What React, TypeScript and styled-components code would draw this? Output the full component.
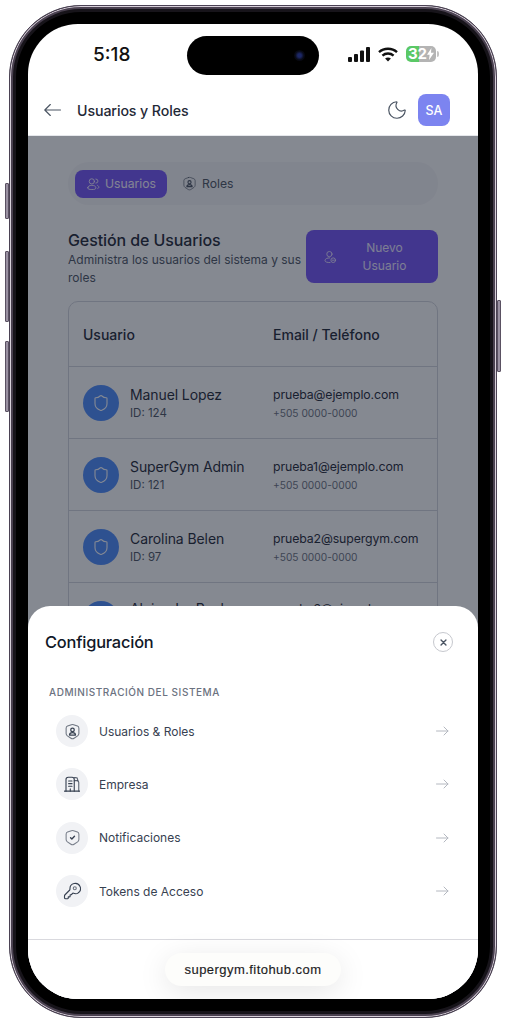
import React from 'react';
import styled, { createGlobalStyle } from 'styled-components';
import { Moon, Shield } from 'lucide-react';

const GlobalStyle = createGlobalStyle`
  html, body {
    margin: 0;
    padding: 0;
    background: #ffffff;
    font-family: "Inter", "Noto Sans", sans-serif;
  }
  * { box-sizing: border-box; }
`;

const Page = styled.div`
  width: 506px;
  height: 1024px;
  padding: 5px 9px 6px;
  overflow: hidden;
`;

const Phone = styled.div`
  position: relative;
  width: 488px;
  height: 1013px;
  padding: 19px;
  border-radius: 72px;
  background: #000;
  border: 1px solid #4b4254;
  box-shadow: inset 0 0 0 1px #d8d0da, inset 0 0 0 3px #4a4150, inset 0 0 0 6px #17141a;
`;

const SideButton = styled.span<{ $top: number; $height: number; $right?: boolean }>`
  position: absolute;
  top: ${(p) => p.$top}px;
  height: ${(p) => p.$height}px;
  width: 4px;
  ${(p) => (p.$right ? 'right: -5px;' : 'left: -5px;')}
  background: #9a91a2;
  border: 1px solid #5a5162;
  border-radius: 1px;
`;

const Screen = styled.div`
  position: relative;
  display: flex;
  flex-direction: column;
  width: 450px;
  height: 975px;
  margin-left: -1px;
  margin-top: -1px;
  border-radius: 50px;
  overflow: hidden;
  background: #fff;
`;

const StatusBar = styled.div`
  display: grid;
  grid-template-columns: 159px 132px 1fr;
  height: 64px;
  flex-shrink: 0;
  padding-top: 12px;
  align-items: start;
`;

const Time = styled.div`
  height: 39px;
  line-height: 38px;
  padding-left: 65px;
  font-size: 19px;
  font-weight: 500;
  color: #111;
`;

const Island = styled.div`
  position: relative;
  height: 39px;
  border-radius: 20px;
  background: #000;
`;

const Camera = styled.span`
  position: absolute;
  top: 14px;
  right: 14px;
  width: 11px;
  height: 11px;
  border-radius: 50%;
  background: radial-gradient(circle, #1c2766 0 22%, #090b18 55%, #000 100%);
`;

const StatusIcons = styled.div`
  display: flex;
  align-items: center;
  gap: 8px;
  height: 36px;
  padding-left: 29px;
`;

const Battery = styled.div`
  position: relative;
  display: flex;
  align-items: center;
  justify-content: center;
  width: 30px;
  height: 16px;
  border-radius: 5px;
  background: linear-gradient(90deg, #5ac866 0 42%, #b4b4b4 42% 100%);
  color: #fff;
  font-size: 15px;
  font-weight: 700;
  line-height: 16px;
  &::after {
    content: '';
    position: absolute;
    right: -3px;
    top: 5px;
    width: 2px;
    height: 6px;
    border-radius: 0 2px 2px 0;
    background: #c4c4c4;
  }
`;

const Header = styled.header`
  display: flex;
  align-items: center;
  height: 47px;
  flex-shrink: 0;
  padding: 0 28px 3px 16px;
  background: #fff;
`;

const BackButton = styled.span`
  display: flex;
  width: 33px;
  color: #4b5563;
`;

const HeaderTitle = styled.h1`
  flex: 1;
  margin: 0;
  font-size: 14.2px;
  font-weight: 500;
  letter-spacing: -0.1px;
  color: #1f2937;
`;

const ThemeToggle = styled.span`
  display: flex;
  margin-right: 10px;
  color: #4b5563;
`;

const UserBadge = styled.div`
  display: flex;
  align-items: center;
  justify-content: center;
  width: 32px;
  height: 32px;
  border-radius: 8px;
  background: #7c84f0;
  color: #fff;
  font-size: 12.5px;
  font-weight: 500;
`;

const Body = styled.main`
  position: relative;
  flex: 1;
  padding: 26px 40px 0;
  background: #f9fafb;
  border-top: 1px solid #e5e7eb;
  overflow: hidden;
`;

const Scrim = styled.div`
  position: absolute;
  inset: 0;
  background: rgba(17, 24, 39, 0.5);
`;

const TabBar = styled.nav`
  display: flex;
  align-items: center;
  gap: 4px;
  height: 43px;
  padding: 0 7px;
  border-radius: 21px;
  background: #f1f2f4;
`;

const Tab = styled.div<{ $active?: boolean }>`
  display: flex;
  align-items: center;
  gap: 5px;
  height: 28px;
  padding: 0 11px;
  border-radius: 8px;
  background: ${(p) => (p.$active ? '#7355f4' : 'transparent')};
  color: ${(p) => (p.$active ? '#f2efff' : '#4b5563')};
  font-size: 12.2px;
  font-weight: 400;
`;

const Section = styled.div`
  display: flex;
  gap: 4px;
  margin-top: 25px;
`;

const SectionText = styled.div`
  flex: 1;
`;

const SectionTitle = styled.h2`
  margin: 0;
  font-size: 16px;
  line-height: 20px;
  font-weight: 500;
  letter-spacing: -0.1px;
  color: #1f2937;
`;

const SectionSub = styled.p`
  margin: 1px 0 0;
  font-size: 12px;
  line-height: 18px;
  color: #4b5563;
`;

const NewButton = styled.div`
  display: flex;
  align-items: center;
  width: 132px;
  height: 53px;
  flex-shrink: 0;
  padding: 0 6px 0 17px;
  border-radius: 8px;
  background: #7355f4;
  color: #e8e4ff;
  font-size: 12px;
  line-height: 18px;
  font-weight: 400;
`;

const NewLabel = styled.span`
  flex: 1;
  text-align: center;
`;

const Table = styled.div`
  margin-top: 14px;
  border: 1px solid #cfd3da;
  border-radius: 10px;
`;

const HeadRow = styled.div`
  display: grid;
  grid-template-columns: 190px 1fr;
  align-items: center;
  height: 64px;
  padding-left: 14px;
  font-size: 14px;
  font-weight: 500;
  color: #1f2937;
`;

const Row = styled.div`
  display: grid;
  grid-template-columns: 190px 1fr;
  align-items: center;
  height: 72px;
  padding-left: 14px;
  border-top: 1.5px solid #cfd3da;
`;

const UserCell = styled.div`
  display: flex;
  align-items: center;
  gap: 11px;
`;

const RowAvatar = styled.div`
  display: flex;
  align-items: center;
  justify-content: center;
  width: 36px;
  height: 36px;
  border-radius: 50%;
  background: #4a8af8;
  color: #f5f8ff;
`;

// a cut row has no second line, the padding keeps its first line in place
const CellText = styled.div<{ $cut?: boolean }>`
  padding-top: 3px;
  padding-bottom: ${(p) => (p.$cut ? 23 : 0)}px;
`;

const PrimaryText = styled.div<{ $small?: boolean }>`
  font-size: ${(p) => (p.$small ? 12.3 : 14)}px;
  line-height: 19px;
  letter-spacing: -0.1px;
  color: #1f2937;
`;

const SecondaryText = styled.div<{ $small?: boolean }>`
  font-size: ${(p) => (p.$small ? 10.2 : 11.5)}px;
  line-height: 19px;
  color: ${(p) => (p.$small ? '#6b7280' : '#4b5563')};
`;

const Sheet = styled.section`
  position: absolute;
  left: 0;
  right: 0;
  bottom: 0;
  height: 393px;
  display: flex;
  flex-direction: column;
  border-radius: 22px 22px 0 0;
  background: #fff;
`;

const SheetHeader = styled.div`
  display: flex;
  align-items: center;
  justify-content: space-between;
  height: 36px;
  margin-top: 18px;
  padding: 0 25px 0 17px;
`;

const SheetTitle = styled.h3`
  margin: 0;
  font-size: 16.4px;
  font-weight: 500;
  letter-spacing: -0.2px;
  color: #111827;
`;

const CloseButton = styled.span`
  display: flex;
  align-items: center;
  justify-content: center;
  width: 20px;
  height: 20px;
  border: 1.5px solid #c6c8ce;
  border-radius: 50%;
  color: #4b5563;
`;

const GroupLabel = styled.div`
  margin: 25px 0 0 21px;
  height: 14px;
  font-size: 10px;
  line-height: 14px;
  font-weight: 500;
  letter-spacing: 0.55px;
  text-transform: uppercase;
  color: #6b7280;
`;

const MenuList = styled.div`
  display: flex;
  flex-direction: column;
  gap: 21.4px;
  margin-top: 16px;
  padding: 0 29px 0 28px;
`;

const MenuItem = styled.div`
  display: flex;
  align-items: center;
  gap: 11px;
  height: 32px;
  font-size: 12px;
  color: #374151;
`;

const MenuIcon = styled.span`
  display: flex;
  align-items: center;
  justify-content: center;
  width: 32px;
  height: 32px;
  border-radius: 50%;
  background: #f1f2f5;
  color: #374151;
`;

const MenuLabel = styled.span`
  flex: 1;
`;

const MenuArrow = styled.span`
  display: flex;
  color: #b4b8c0;
`;

const BrowserBar = styled.footer`
  position: absolute;
  left: 0;
  right: 0;
  bottom: 0;
  height: 60px;
  display: flex;
  justify-content: center;
  padding-top: 13px;
  border-top: 1px solid #d9d9de;
  background: #fff;
`;

const UrlPill = styled.div`
  width: 176px;
  height: 33px;
  border-radius: 17px;
  background: #fdfdfb;
  box-shadow: 0 6px 30px rgba(0, 0, 0, 0.1);
  font-family: "Liberation Sans", Arial, sans-serif;
  font-size: 13px;
  line-height: 33px;
  letter-spacing: 0.45px;
  text-align: center;
  color: #1c1c1e;
  -webkit-text-stroke: 0.15px #1c1c1e;
`;

type IconProps = { size?: number };

const Stroke = ({ size = 18, children }: IconProps & { children: React.ReactNode }) => (
  <svg width={size} height={size} viewBox="0 0 24 24" fill="none" stroke="currentColor" strokeWidth={1.5} strokeLinecap="round" strokeLinejoin="round">
    {children}
  </svg>
);

const SignalIcon = () => (
  <svg width="22" height="15" viewBox="0 0 22 15" fill="#111">
    <rect x="0" y="10" width="4" height="5" rx="1" />
    <rect x="6" y="7" width="4" height="8" rx="1" />
    <rect x="12" y="3.5" width="4" height="11.5" rx="1" />
    <rect x="18" y="0" width="4" height="15" rx="1" />
  </svg>
);

const WifiIcon = () => (
  <svg width="20" height="15" viewBox="0 0 20 15" fill="none" stroke="#111" strokeWidth="2.4">
    <path d="M1 5.2C6 .6 14 .6 19 5.2" />
    <path d="M4.4 8.6c3.2-2.8 8-2.8 11.2 0" />
    <path d="M10 14.6l-2.9-3.1c1.7-1.3 4.1-1.3 5.8 0z" fill="#111" stroke="none" />
  </svg>
);

const BoltIcon = () => (
  <svg width="7" height="12" viewBox="0 0 7 12" fill="#fff">
    <path d="M4.4 0 0 6.8h2.6L2 12l5-7.2H4z" />
  </svg>
);

const LongArrowLeft = () => (
  <svg width="17" height="14" viewBox="0 0 17 14" fill="none" stroke="currentColor" strokeWidth="1.15" strokeLinecap="round" strokeLinejoin="round">
    <path d="M16.5 7H.8M6.3 1.500.8 7l5.500 5.500" />
  </svg>
);

const LongArrowRight = () => (
  <svg width="13" height="10" viewBox="0 0 13 10" fill="none" stroke="currentColor" strokeWidth="1" strokeLinecap="round" strokeLinejoin="round">
    <path d="M.5 5h11.500M8 1l4 4-4 4" />
  </svg>
);

const CloseGlyph = () => (
  <svg width="7" height="7" viewBox="0 0 8 8" fill="none" stroke="currentColor" strokeWidth="1.6" strokeLinecap="round">
    <path d="M1.200 1.200l5.600 5.600M6.800 1.200 1.200 6.800" />
  </svg>
);

const UsersIcon = ({ size = 14 }: IconProps) => (
  <Stroke size={size}>
    <circle cx="10" cy="7.500" r="4.500" />
    <path d="M3 18.500c0-2.600 3-4.200 7-4.200s7 1.600 7 4.200-3 3-7 3-7-.4-7-3z" />
    <path d="M17 3.500a3.500 3.500 0 0 1 0 7M20 14.500c1.400.7 2 1.900 2 3 0 1-.6 1.800-1.800 2.200" />
  </Stroke>
);

const UserAddIcon = ({ size = 14 }: IconProps) => (
  <Stroke size={size}>
    <circle cx="11" cy="7" r="4.500" />
    <path d="M12 21.500c-4.500 0-8.500-.6-8.500-3.500s3.500-4.500 8-4.500" />
    <circle cx="17.500" cy="17.500" r="4" />
    <path d="M15.800 17.500h3.400" />
  </Stroke>
);

const shieldPath =
  'M10.500 2.400 5 4.400C3.700 4.900 3 6 3 7.300v7.500c0 1.200.8 2.700 1.800 3.400l5 3.300c1.300.9 3.100.9 4.400 0l5-3.300c1-.7 1.800-2.200 1.800-3.400V7.300c0-1.300-.7-2.400-2-2.900l-5.500-2c-.9-.3-2.100-.3-3 0z';

const SecurityUserIcon = ({ size = 17 }: IconProps) => (
  <Stroke size={size}>
    <path d={shieldPath} strokeOpacity={0.7} />
    <circle cx="12" cy="9.800" r="2.500" strokeWidth={1.8} />
    <path d="M7.800 17c0-4.400 8.400-4.400 8.400 0z" strokeWidth={1.8} />
  </Stroke>
);

const BuildingIcon = ({ size = 18 }: IconProps) => (
  <Stroke size={size}>
    <path d="M2 21.500h20" />
    <path d="M4 21.500V6c0-2 1-3 3-3h5c2 0 3 1 3 3v15.500" />
    <path d="M15 7.500h3.500c1.500 0 2.500 1 2.500 2.500v11.500" strokeOpacity={0.8} />
    <path d="M15 3.500h2c1.500 0 2.500 1 2.500 2.500v1.500" strokeOpacity={0.8} />
    <path d="M7.500 8h4.500M7.500 11.500h4.500M7.500 15h4.500M9.700 21.500v-3" />
  </Stroke>
);

const ShieldTickIcon = ({ size = 17 }: IconProps) => (
  <Stroke size={size}>
    <path d={shieldPath} strokeOpacity={0.65} />
    <path d="m9.300 12.300 1.800 1.700 3.700-3.600" strokeWidth={2} />
  </Stroke>
);

const KeyIcon = ({ size = 18 }: IconProps) => (
  <Stroke size={size}>
    <path d="M20 14.800a7 7 0 1 0-10.700-5.600c0 .9-.1 1.300-.6 1.800l-6 6c-.4.4-.7 1.100-.7 1.700v2.300c0 .9.700 1.400 1.500 1.400h2.500c.5 0 1-.5 1-1v-1.500h1.500c.5 0 1-.5 1-1V17h1.500l2.200-2.200c1.900.8 5.100 1.300 6.800 0z" />
    <circle cx="15.700" cy="8.300" r="2" strokeOpacity={0.7} />
  </Stroke>
);

// the fourth row runs under the sheet, only its first line shows
const users = [
  { name: 'Manuel Lopez', id: 124, email: 'prueba@ejemplo.com', cut: false },
  { name: 'SuperGym Admin', id: 121, email: 'prueba1@ejemplo.com', cut: false },
  { name: 'Carolina Belen', id: 97, email: 'prueba2@supergym.com', cut: false },
  { name: 'Alejandro Rocha', id: 96, email: 'prueba3@ejemplo.com', cut: true },
];

const menu = [
  { label: 'Usuarios & Roles', icon: <SecurityUserIcon /> },
  { label: 'Empresa', icon: <BuildingIcon /> },
  { label: 'Notificaciones', icon: <ShieldTickIcon /> },
  { label: 'Tokens de Acceso', icon: <KeyIcon /> },
];

const App: React.FC = () => (
  <Page>
    <GlobalStyle />
    <Phone>
      <SideButton $top={177} $height={36} />
      <SideButton $top={245} $height={71} />
      <SideButton $top={335} $height={71} />
      <SideButton $right $top={294} $height={72} />
      <Screen>
        <StatusBar>
          <Time>5:18</Time>
          <Island>
            <Camera />
          </Island>
          <StatusIcons>
            <SignalIcon />
            <WifiIcon />
            <Battery>
              32
              <BoltIcon />
            </Battery>
          </StatusIcons>
        </StatusBar>
        <Header>
          <BackButton>
            <LongArrowLeft />
          </BackButton>
          <HeaderTitle>Usuarios y Roles</HeaderTitle>
          <ThemeToggle>
            <Moon size={22} strokeWidth={1.3} />
          </ThemeToggle>
          <UserBadge>SA</UserBadge>
        </Header>
        <Body>
          <TabBar>
            <Tab $active>
              <UsersIcon />
              Usuarios
            </Tab>
            <Tab>
              <SecurityUserIcon size={15} />
              Roles
            </Tab>
          </TabBar>
          <Section>
            <SectionText>
              <SectionTitle>Gestión de Usuarios</SectionTitle>
              <SectionSub>Administra los usuarios del sistema y sus roles</SectionSub>
            </SectionText>
            <NewButton>
              <UserAddIcon />
              <NewLabel>
                Nuevo
                <br />
                Usuario
              </NewLabel>
            </NewButton>
          </Section>
          <Table>
            <HeadRow>
              <span>Usuario</span>
              <span>Email / Teléfono</span>
            </HeadRow>
            {users.map((user) => (
              <Row key={user.id}>
                <UserCell>
                  <RowAvatar>
                    <Shield size={18} strokeWidth={1.5} />
                  </RowAvatar>
                  <CellText $cut={user.cut}>
                    <PrimaryText>{user.name}</PrimaryText>
                    {!user.cut && <SecondaryText>ID: {user.id}</SecondaryText>}
                  </CellText>
                </UserCell>
                <CellText $cut={user.cut}>
                  <PrimaryText $small>{user.email}</PrimaryText>
                  {!user.cut && <SecondaryText $small>+505 0000-0000</SecondaryText>}
                </CellText>
              </Row>
            ))}
          </Table>
          <Scrim />
        </Body>
        <Sheet>
          <SheetHeader>
            <SheetTitle>Configuración</SheetTitle>
            <CloseButton>
              <CloseGlyph />
            </CloseButton>
          </SheetHeader>
          <GroupLabel>Administración del sistema</GroupLabel>
          <MenuList>
            {menu.map((item) => (
              <MenuItem key={item.label}>
                <MenuIcon>{item.icon}</MenuIcon>
                <MenuLabel>{item.label}</MenuLabel>
                <MenuArrow>
                  <LongArrowRight />
                </MenuArrow>
              </MenuItem>
            ))}
          </MenuList>
          <BrowserBar>
            <UrlPill>supergym.fitohub.com</UrlPill>
          </BrowserBar>
        </Sheet>
      </Screen>
    </Phone>
  </Page>
);

export default App;
